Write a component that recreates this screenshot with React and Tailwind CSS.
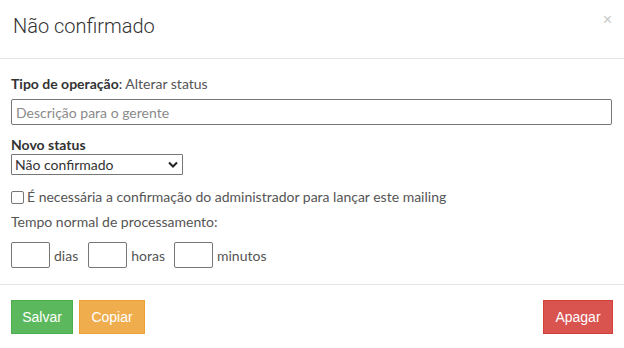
export default function App() {
  const body = { fontFamily: 'Lato, "Noto Sans", sans-serif' };
  return (
    <div className="w-[624px] h-[348px] bg-white flex flex-col text-[14px] text-[#555]" style={body}>
      <div className="h-[59px] border-b border-[#e5e5e5] flex items-start justify-between pl-[13px] pr-[12px] pt-[12px]">
        <div className="text-[20px] leading-[28px] font-light text-[#333]" style={{ fontFamily: 'Roboto, "Liberation Sans", sans-serif' }}>Não confirmado</div>
        <div className="text-[#c8c8c8] text-[16px] leading-[14px] mt-[1px]" style={{ fontFamily: '"Liberation Sans", sans-serif' }}>×</div>
      </div>
      <div className="flex-1 px-[11px] pt-[16px] flex flex-col border-b border-[#e5e5e5]">
        <div className="leading-[18px]"><span className="font-bold text-[#333]">Tipo de operação</span><span className="text-[#333]">:</span> Alterar status</div>
        <div className="mt-[6px] h-[26px] w-[601px] border border-[#767676] rounded-[2px] flex items-center px-[4px] text-[#8a8a8a]">Descrição para o gerente</div>
        <div className="mt-[11px] font-bold text-[#333] leading-[18px]">Novo status</div>
        <div className="mt-[0px] h-[21px] w-[172px] border border-[#767676] rounded-[1px] flex items-center justify-between pl-[3px] pr-[4px] text-[#333]">
          <span>Não confirmado</span>
          <svg width="10" height="7" viewBox="0 0 10 7"><path d="M1 1.5 L5 5.5 L9 1.5" stroke="#222" strokeWidth="2" fill="none" /></svg>
        </div>
        <div className="mt-[13px] flex items-center leading-[18px]">
          <span className="w-[13px] h-[13px] border border-[#767676] rounded-[2px] mr-[3px]"></span>
          <span>É necessária a confirmação do administrador para lançar este mailing</span>
        </div>
        <div className="mt-[7px] leading-[18px]">Tempo normal de processamento:</div>
        <div className="mt-[11px] flex items-center">
          <div className="w-[39px] h-[26px] border border-[#767676] rounded-[2px]"></div>
          <span className="ml-[4px] mr-[10px]">dias</span>
          <div className="w-[39px] h-[26px] border border-[#767676] rounded-[2px]"></div>
          <span className="ml-[4px] mr-[9px]">horas</span>
          <div className="w-[39px] h-[26px] border border-[#767676] rounded-[2px]"></div>
          <span className="ml-[4px]">minutos</span>
        </div>
      </div>
      <div className="h-[63px] px-[11px] pt-[15px] flex items-start justify-between" style={{ fontFamily: '"Liberation Sans", sans-serif' }}>
        <div className="flex gap-[6px]">
          <div className="w-[62px] h-[34px] bg-[#5cb85c] border border-[#4cae4c] text-white flex items-center justify-center">Salvar</div>
          <div className="w-[66px] h-[34px] bg-[#f0ad4e] border border-[#eea236] text-white flex items-center justify-center">Copiar</div>
        </div>
        <div className="w-[70px] h-[34px] bg-[#d9534f] border border-[#d43f3a] text-white flex items-center justify-center">Apagar</div>
      </div>
    </div>
  );
}
